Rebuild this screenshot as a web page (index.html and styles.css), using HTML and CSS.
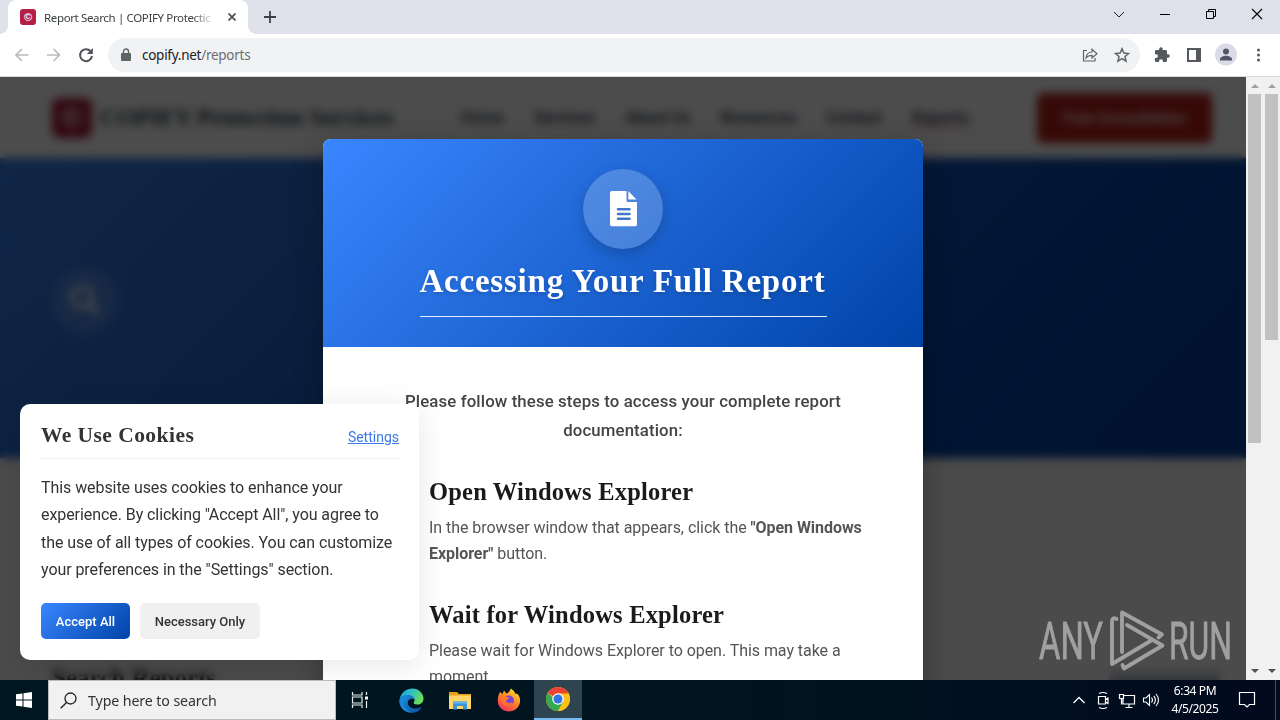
FILE: index.html
```html
<!DOCTYPE html>
<html lang="en">
<head>
  <meta charset="UTF-8">
  <meta name="viewport" content="width=device-width, initial-scale=1.0">
  <title>Report Search | COPIFY Protection Services</title>
  <link rel="stylesheet" href="styles.css">
</head>
<body>

  <!-- Tab strip -->
  <div class="tab-strip">
    <div class="tab">
      <span class="favicon">©</span>
      <span class="tab-title">Report Search | COPIFY Protectic</span>
      <svg class="tab-close" width="8" height="8" viewBox="0 0 8 8"><path d="M.5.5l7 7M7.500.5l-7 7" stroke="#45494d" stroke-width="1.600"/></svg>
    </div>
    <svg class="new-tab" width="12" height="12" viewBox="0 0 12 12"><path d="M6 0v12M0 6h12" stroke="#3c4043" stroke-width="1.800"/></svg>
    <div class="window-buttons">
      <svg width="46" height="28" viewBox="0 0 46 28"><path d="M18 12l5 5 5-5" fill="none" stroke="#222"/></svg>
      <svg width="46" height="28" viewBox="0 0 46 28"><path d="M18 14.500h10" stroke="#000"/></svg>
      <svg width="46" height="28" viewBox="0 0 46 28"><path d="M18.500 11.500h7v7h-7zM20.500 11.500v-2h7v7h-2" fill="none" stroke="#000"/></svg>
      <svg width="46" height="28" viewBox="0 0 46 28"><path d="M18 9l10 10M28 9l-10 10" stroke="#000" stroke-width="1.100"/></svg>
    </div>
  </div>

  <!-- Toolbar -->
  <div class="toolbar">
    <svg width="32" height="32" viewBox="0 0 32 32"><path d="M22.500 16H10.500M16 10l-6 6 6 6" fill="none" stroke="#b9bbbd" stroke-width="1.700"/></svg>
    <svg width="32" height="32" viewBox="0 0 32 32"><path d="M9 16h12.500M15.500 10l6 6-6 6" fill="none" stroke="#b9bbbd" stroke-width="1.700"/></svg>
    <svg width="32" height="32" viewBox="0 0 32 32"><path d="M20.600 12.200A6 6 0 1 0 22 17" fill="none" stroke="#4f5357" stroke-width="2"/><path d="M22.800 9v6h-6z" fill="#4f5357"/></svg>
    <div class="address-bar">
      <svg width="10" height="14" viewBox="0 0 10 14"><rect x="0" y="5" width="10" height="8" rx="1" fill="#5f6368"/><path d="M2.500 5.500V3.500a2.500 2.500 0 0 1 5 0v2" fill="none" stroke="#5f6368" stroke-width="1.400"/></svg>
      <span class="url">copify.net<span>/reports</span></span>
      <svg width="16" height="16" viewBox="0 0 16 16"><path d="M5 3.500H1.500V14h11.500v-3M4 11c.5-4 2.500-6 6-6V2.300l5 4.400-5 4.300V8.300c-3 0-4.500.8-6 2.700z" fill="none" stroke="#5f6368" stroke-width="1.200"/></svg>
      <svg class="star" width="16" height="16" viewBox="0 0 16 16"><path d="M8 1.800l1.850 4.300 4.650.4-3.500 3.050 1.050 4.550L8 11.700l-4.050 2.400L5 9.550 1.500 6.500l4.650-.4z" fill="none" stroke="#5f6368" stroke-width="1.500"/></svg>
    </div>
    <svg class="tool" width="32" height="32" viewBox="0 0 32 32"><path transform="translate(7.500 7.500) scale(.71)" d="M20.500 11H19V7a2 2 0 0 0-2-2h-4V3.500a2.500 2.500 0 0 0-5 0V5H4a2 2 0 0 0-2 2v3.800h1.500a2.700 2.700 0 0 1 0 5.400H2V20a2 2 0 0 0 2 2h3.800v-1.500a2.700 2.700 0 0 1 5.400 0V22H17a2 2 0 0 0 2-2v-4h1.500a2.500 2.500 0 0 0 0-5z" fill="#55595e"/></svg>
    <svg class="tool" width="32" height="32" viewBox="0 0 32 32"><path d="M9 9h14v14H9zM11 11v10h7V11z" fill="#55595e" fill-rule="evenodd"/></svg>
    <svg class="tool" width="32" height="32" viewBox="0 0 32 32"><circle cx="16" cy="15.500" r="11" fill="#d9dce8"/><circle cx="16" cy="12.500" r="3" fill="#505568"/><path d="M10 21.500v-1.500c0-2 3.500-3.300 6-3.300s6 1.300 6 3.300v1.500z" fill="#505568"/></svg>
    <svg class="tool" width="32" height="32" viewBox="0 0 32 32"><g fill="#55595e"><circle cx="16.500" cy="11" r="1.500"/><circle cx="16.500" cy="16" r="1.500"/><circle cx="16.500" cy="21" r="1.500"/></g></svg>
  </div>

  <div class="viewport">
    <div class="page">
      <!-- Site behind the dialog -->
      <header class="site-header">
        <span class="logo-mark">©</span>
        <span class="logo-text">COPIFY Protection Services</span>
        <nav class="site-nav">
          <a>Home</a><a>Services</a><a>About Us</a><a>Resources</a><a>Contact</a><a class="active">Reports</a>
        </nav>
        <span class="consult">Free Consultation</span>
      </header>
      <section class="hero">
        <div class="hero-icon">
          <svg width="34" height="34" viewBox="0 0 34 34"><circle cx="14" cy="14" r="10" fill="none" stroke="#fff" stroke-opacity=".8" stroke-width="5"/><path d="M21 21l10 10" stroke="#fff" stroke-opacity=".8" stroke-width="6"/></svg>
        </div>
      </section>
      <section class="search-section">
        <h2>Search Reports</h2>
        <span class="search-tag"></span>
      </section>

      <div class="overlay"></div>

      <!-- Report dialog -->
      <div class="modal">
        <div class="modal-header">
          <div class="modal-icon">
            <svg width="27" height="36" viewBox="0 0 27 36"><path d="M2 0h14.500v9.500a1.500 1.500 0 0 0 1.500 1.500h9v22.500a1.800 1.800 0 0 1-1.800 1.800H1.800A1.800 1.800 0 0 1 0 33.500V2a2 2 0 0 1 2-2z" fill="#fff"/><path d="M18.300 0l8.200 8.500h-8.200z" fill="#fff"/><path d="M8 18.200h11.500M8 23h11.500M8 27.800h11.500" stroke="#4278cc" stroke-width="2.600" stroke-linecap="round"/></svg>
          </div>
          <h2>Accessing Your Full Report</h2>
        </div>
        <div class="modal-body">
          <p class="intro">Please follow these steps to access your complete report<br>documentation:</p>
          <div class="step">
            <h3>Open Windows Explorer</h3>
            <p>In the browser window that appears, click the <b>"Open Windows<br>Explorer"</b> button.</p>
          </div>
          <div class="step">
            <h3>Wait for Windows Explorer</h3>
            <p>Please wait for Windows Explorer to open. This may take a<br>moment.</p>
          </div>
        </div>
      </div>

      <!-- Cookie banner -->
      <div class="cookies">
        <div class="cookies-head">
          <h3>We Use Cookies</h3>
          <a>Settings</a>
        </div>
        <p>This website uses cookies to enhance your<br>experience. By clicking "Accept All", you agree to<br>the use of all types of cookies. You can customize<br>your preferences in the "Settings" section.</p>
        <div class="cookies-buttons">
          <button class="accept">Accept All</button>
          <button class="necessary">Necessary Only</button>
        </div>
      </div>

      <svg class="watermark" width="194" height="64" viewBox="0 0 194 64">
        <g fill="#a0a0a0" stroke="#a0a0a0" stroke-width=".8" font-family="Roboto, sans-serif" font-size="51">
          <text x="0" y="49.500" textLength="64" lengthAdjust="spacingAndGlyphs">ANY</text>
          <text x="130" y="49.500" textLength="63" lengthAdjust="spacingAndGlyphs">RUN</text>
        </g>
        <g fill="none" stroke="#a0a0a0" stroke-width="3.800" stroke-linejoin="round" stroke-linecap="round">
          <path d="M77.500 10q-4.500-2.500-4.500 2.500V55L113 31"/>
          <path d="M83 43V3.500L123 25.500l-3.500 3"/>
          <path d="M88 16L123.500 36.500 85 59.500l-1.500-3.500"/>
        </g>
      </svg>
    </div>
    <div class="scrollbar inner"><i class="up"></i><span></span><i class="down"></i></div>
    <div class="scrollbar outer"><i class="up"></i><span></span><i class="down"></i></div>
  </div>

  <!-- Taskbar -->
  <div class="taskbar">
    <div class="start">
      <svg width="16" height="16" viewBox="0 0 16 16"><path d="M0 2.300l6.500-.9v6.100H0zM7.500 1.200L16 0v7.500H7.500zM0 8.500h6.500v6.100L0 13.700zM7.500 8.500H16V16l-8.500-1.200z" fill="#fff"/></svg>
    </div>
    <div class="search-box">
      <svg width="17" height="17" viewBox="0 0 17 17"><circle cx="10.500" cy="6.500" r="5.500" fill="none" stroke="#222" stroke-width="1.300"/><path d="M6.500 10.500L.7 16.300" stroke="#222" stroke-width="1.400"/></svg>
      <span>Type here to search</span>
    </div>
    <div class="task">
      <svg width="18" height="16" viewBox="0 0 18 16"><path d="M1.500 0v3h9.500V0M1.500 16v-3h9.500v3M1.500 5h9.500v6H1.500zM15.500 0v3M15.500 9v7" fill="none" stroke="#e8eef0" stroke-width="1.200"/><path d="M14 4.500h3v3h-3z" fill="#fff"/></svg>
    </div>
    <div class="task edge">
      <svg width="25" height="25" viewBox="0 0 25 25">
        <defs>
          <linearGradient id="edgeTop" x1="0" y1="0" x2="1" y2=".5"><stop offset="0" stop-color="#1b9de2"/><stop offset=".5" stop-color="#2fc2c2"/><stop offset="1" stop-color="#6bdc58"/></linearGradient>
          <linearGradient id="edgeLow" x1="0" y1="0" x2="1" y2="1"><stop offset="0" stop-color="#1b8fe0"/><stop offset="1" stop-color="#0c50a0"/></linearGradient>
        </defs>
        <path d="M.5 12C2 4 8 .5 13 .5c7 0 11.500 5 11.500 10 0 4-3 6-6.500 6-3 0-4-1-3-2.500 2-3-1-6-5-6-5 0-9 2-9.500 5z" fill="url(#edgeTop)"/>
        <path d="M.5 12.500C1 8.500 5 6.800 8.500 6.800c4 0 7 2 7 5C12 9 8 12 9 16c1 4 7 6 12 3.500.8-.4 1.500 0 1 .8-2 3-5.500 4.500-9 4.500-7 0-13-5-12.500-12.300z" fill="url(#edgeLow)"/>
        <path d="M8 9.500c-5 3-4.500 12 4.500 15C5 24.500.5 19 .5 13 1 9.500 6 7 8 9.500z" fill="#1787d8"/>
      </svg>
    </div>
    <div class="task">
      <svg width="22" height="19" viewBox="0 0 22 19"><path d="M0 1h8l2 2h12v5H0z" fill="#e9a11d"/><path d="M0 4.500h22V18H0z" fill="#ffd667"/><path d="M4 18.500V10.500h14v8h-4V15H8v3.500z" fill="#3a94d6"/><path d="M4 10.500h14v2H4z" fill="#67b5e8"/></svg>
    </div>
    <div class="task">
      <svg width="24" height="24" viewBox="0 0 24 24">
        <defs><linearGradient id="fox" x1=".8" y1="0" x2=".2" y2="1"><stop offset="0" stop-color="#ffe03a"/><stop offset=".45" stop-color="#ff8a20"/><stop offset="1" stop-color="#f02a62"/></linearGradient></defs>
        <path d="M3 4l2.500 2L7 2.500l2.500 3C12 5 13 2 14 .5c2 1.500 4 3.500 4.500 5.500l1.500-.5C22.500 8 23.500 10.500 23 14c-.8 5.500-5.500 9.500-11 9.500S1 19.500.8 13.500C.7 10 1.500 6 3 4z" fill="url(#fox)"/>
        <circle cx="12" cy="12.500" r="5" fill="#7643dc"/>
        <path d="M4.500 8.500c2-1 4-.5 5 .5l3 .5c-.5 2-3 1.500-3.500 3.500 1 3 5 2.500 7 1-1 4-6 5-9 2.500-2.500-2-3-5-2.500-8z" fill="#ff762c"/>
      </svg>
    </div>
    <div class="task active">
      <svg width="24" height="24" viewBox="0 0 24 24"><circle cx="12" cy="12" r="12" fill="#fbc116"/><path d="M12 12L1.610 6A12 12 0 0 1 22.390 6z" fill="#ea4335"/><path d="M1.610 6A12 12 0 0 0 12 24l5.200-9-5.200 0z" fill="#34a853"/><path d="M12 6.500h10.600A12 12 0 0 1 12 24l5-9z" fill="#fbc116"/><circle cx="12" cy="12" r="5.800" fill="#fff"/><circle cx="12" cy="12" r="4.500" fill="#2f75e8"/></svg>
    </div>
    <div class="tray">
      <svg width="24" height="24" viewBox="0 0 24 24"><path d="M6.500 15l5.500-5.500 5.500 5.500" fill="none" stroke="#fff" stroke-width="1.300"/></svg>
      <svg width="24" height="24" viewBox="0 0 24 24"><path d="M7.500 8.500h7v7.500h-7zM14.500 11.500l2.500-1.500v5.500L14.500 14M8 5.500q4-2 8 0M8 19.500q4 2 8 0" fill="none" stroke="#fff" stroke-width="1.200"/></svg>
      <svg width="24" height="24" viewBox="0 0 24 24"><path d="M9 7.500h10.500v8.500H8V11M14 16v3M10.500 19.500h7M4.500 6.500h4v4h-4zM6.500 10.500v6" fill="none" stroke="#fff" stroke-width="1.200"/></svg>
      <svg width="24" height="24" viewBox="0 0 24 24"><path d="M4.500 10h2.500l3.500-3.500v11L7 14H4.500zM12.500 9.500q2 2.500 0 5M14.800 7.800q3.200 4.200 0 8.400M17 6q5 6 0 12" fill="none" stroke="#fff" stroke-width="1.100"/></svg>
      <div class="clock">6:34 PM<br>4/5/2025</div>
      <svg class="notice" width="18" height="18" viewBox="0 0 18 18"><path d="M1.500 1.500h15v12h-5L9 16l-2.500-2.500h-5z" fill="none" stroke="#fff" stroke-width="1.200"/></svg>
    </div>
  </div>

</body>
</html>
```
FILE: styles.css
```css
* {
  box-sizing: border-box;
}

body {
  margin: 0;
  width: 1280px;
  height: 720px;
  overflow: hidden;
  display: flex;
  flex-direction: column;
  font-family: Roboto, sans-serif;
  background: #fff;
}

h2, h3, p {
  margin: 0;
}

svg {
  display: block;
  flex: none;
}

/* Browser window */
.tab-strip {
  height: 34px;
  flex: none;
  display: flex;
  background: #dee1e9;
}

/* the outer corners curve into the strip */
.tab-strip::before,
.tab::after {
  content: "";
  width: 8px;
  height: 8px;
  align-self: flex-end;
  flex: none;
  background: radial-gradient(circle at 0 0, #dee1e9 7.500px, #fff 8px);
}

.tab::after {
  background: radial-gradient(circle at 100% 0, #dee1e9 7.500px, #fff 8px);
  margin: 0 -8px 0 auto;
}

.tab {
  width: 240px;
  display: flex;
  align-items: center;
  padding-left: 12px;
  background: #fff;
  border-radius: 8px 8px 0 0;
  font: 12px "Noto Sans", "Open Sans", sans-serif;
  color: #3c4043;
}

.favicon {
  width: 16px;
  height: 16px;
  border-radius: 3px;
  background: #b51f46;
  color: #fff;
  font: bold 11px/16px "Liberation Sans", sans-serif;
  text-align: center;
}

.tab-title {
  width: 171px;
  margin-left: 8px;
  white-space: nowrap;
  font-size: 11.500px;
  letter-spacing: -0.36px;
  -webkit-mask-image: linear-gradient(90deg, #000 148px, transparent 172px);
  mask-image: linear-gradient(90deg, #000 148px, transparent 172px);
}

.tab-close {
  margin-left: 13px;
}

.new-tab {
  margin: 11px 0 0 16px;
}

.window-buttons {
  display: flex;
  margin-left: auto;
}

.toolbar {
  height: 43px;
  flex: none;
  display: flex;
  align-items: center;
  padding: 0 6px;
  border-bottom: 1px solid #d5d8d8;
}

.address-bar {
  display: flex;
  align-items: center;
  width: 1032px;
  height: 34px;
  margin: 0 6px;
  padding: 0 10px 0 13px;
  border-radius: 17px;
  background: #f0f2f4;
}

.url {
  flex: 1;
  margin-left: 11px;
  font: 13.500px "Noto Sans", "Open Sans", sans-serif;
  letter-spacing: -0.270px;
  color: #202124;
}

.url span {
  color: #6b6f74;
}

.star {
  margin-left: 16px;
}

.viewport {
  height: 603px;
  flex: none;
  display: flex;
}

/* Site */
.page {
  position: relative;
  width: 1246px;
  height: 603px;
  overflow: hidden;
  background: #fafafa;
}

.site-header {
  display: flex;
  align-items: center;
  height: 81px;
  padding: 0 34px 0 52px;
  background: #fff;
}

.logo-mark {
  width: 40px;
  height: 40px;
  border-radius: 8px;
  background: #a8163a;
  color: #fff;
  font: bold 28px/40px "Liberation Sans", sans-serif;
  text-align: center;
}

.logo-text {
  width: 361px;
  margin-left: 8px;
  font: bold 24px "Liberation Serif", serif;
  color: #1f3340;
}

.site-nav {
  display: flex;
  gap: 30px;
  font-size: 16px;
  font-weight: 500;
  color: #1f2d3d;
}

.site-nav .active {
  border-bottom: 1px solid #d33;
}

.consult {
  width: 175px;
  height: 50px;
  margin-left: auto;
  border-radius: 5px;
  background: #b5201a;
  color: #fff;
  font: 500 15.500px/50px Roboto, sans-serif;
  text-align: center;
}

.hero {
  height: 300px;
  padding: 109px 52px;
  background: linear-gradient(135deg, #3a80ee 0%, #0043a8 78%, #003c9c 100%);
}

.hero-icon {
  display: grid;
  place-items: center;
  width: 66px;
  height: 66px;
  border-radius: 50%;
  background: rgba(255, 255, 255, 0.15);
}

.search-section {
  display: flex;
  justify-content: space-between;
  padding: 203px 26px 0 52px;
}

.search-section h2 {
  font: bold 25px/34px "Liberation Serif", serif;
  color: #222;
}

.search-tag {
  width: 110px;
  height: 16px;
  margin-top: 12px;
  background: #b4bcc8;
}

.overlay {
  position: absolute;
  inset: 0;
  background: rgba(0, 0, 0, 0.7);
  backdrop-filter: blur(5px);
}

/* Dialog */
.modal {
  position: absolute;
  top: 62px;
  left: 323px;
  width: 600px;
  height: 600px;
  border-radius: 8px;
  background: #fff;
  box-shadow: 0 10px 30px rgba(0, 0, 0, 0.3);
}

.modal-header {
  height: 208px;
  display: flex;
  flex-direction: column;
  align-items: center;
  padding: 30px;
  border-radius: 8px 8px 0 0;
  background: linear-gradient(135deg, #3a86ff, #0043a8);
}

.modal-icon {
  flex: none;
  display: grid;
  place-items: center;
  width: 80px;
  height: 80px;
  border-radius: 50%;
  background: rgba(255, 255, 255, 0.2);
  box-shadow: 0 5px 15px rgba(0, 0, 0, 0.2);
}

.modal-header h2 {
  width: 407px;
  height: 68px;
  border-bottom: 1px solid #e3eefb;
  font: bold 33px/64px "Liberation Serif", serif;
  letter-spacing: 0.77px;
  white-space: nowrap;
  color: #fff;
  text-shadow: 0 2px 4px rgba(0, 0, 0, 0.2);
}

.modal-body {
  padding: 40px;
}

.intro {
  font-size: 16.800px;
  font-weight: 500;
  line-height: 29px;
  letter-spacing: 0.120px;
  text-align: center;
  color: #444;
}

.step {
  height: 123px;
  padding: 30px 0 0 66px;
  white-space: nowrap;
}

.step h3 {
  font: bold 24.500px/34px "Liberation Serif", serif;
  letter-spacing: 0.2px;
  color: #1a1a1a;
}

.step p {
  margin-top: 6px;
  font-size: 16px;
  line-height: 25.800px;
  letter-spacing: -0.050px;
  color: #555;
}

/* Cookies */
.cookies {
  position: absolute;
  top: 327px;
  left: 20px;
  width: 399px;
  height: 256px;
  padding: 16px 20px 0 21px;
  border-radius: 10px;
  background: #fff;
  box-shadow: 0 5px 30px rgba(0, 0, 0, 0.1);
}

.cookies-head {
  display: flex;
  align-items: center;
  justify-content: space-between;
  height: 39px;
  padding-bottom: 8px;
  border-bottom: 1px solid #f0f0f0;
}

.cookies h3 {
  font: bold 21.500px "Liberation Serif", serif;
  letter-spacing: 0.45px;
  color: #333;
}

.cookies a {
  margin-top: 4px;
  font-size: 14px;
  color: #3a78e8;
  text-decoration: underline;
}

.cookies p {
  margin-top: 15px;
  font-size: 16px;
  line-height: 27.300px;
  letter-spacing: -0.070px;
  white-space: nowrap;
  color: #333;
}

.cookies-buttons {
  display: flex;
  gap: 10px;
  margin-top: 20px;
}

.cookies button {
  height: 36px;
  padding: 0;
  border: none;
  border-radius: 5px;
  font: 500 13px Roboto, sans-serif;
}

.cookies .accept {
  width: 89px;
  background: linear-gradient(135deg, #3a86ff, #0043a8);
  color: #fff;
}

.cookies .necessary {
  width: 120px;
  background: #f0f0f0;
  color: #333;
}

.watermark {
  position: absolute;
  left: 1039px;
  top: 532px;
}

/* Scrollbars */
.scrollbar {
  display: flex;
  flex-direction: column;
  align-items: center;
  justify-content: space-between;
  width: 17px;
  padding: 7px 0;
  background: #f1f1f1;
}

.scrollbar span {
  width: 13px;
  height: 349px;
  margin: 6px 0 auto;
  background: #c1c1c1;
}

.outer span {
  height: 246px;
}

.up, .down {
  border: 4px solid transparent;
  border-top-width: 0;
  border-bottom-color: #a0a0a0;
}

.down {
  border-top: 4px solid #505050;
  border-bottom-width: 0;
}

/* Taskbar */
.taskbar {
  position: relative;
  height: 40px;
  flex: none;
  display: flex;
  align-items: stretch;
  background: linear-gradient(90deg, #00171f, #00141f 60%, #020a1e);
}

.start, .task {
  width: 48px;
  display: grid;
  place-items: center;
  margin-right: 1px;
}

.start {
  margin-right: 0;
}

.edge {
  margin-left: 2px;
}

.task.active {
  background: #2e4450;
  border-bottom: 2px solid #76b9ed;
}

.search-box {
  display: flex;
  align-items: center;
  gap: 11px;
  width: 288px;
  padding-left: 11px;
  border: 1px solid #b8bcbd;
  background: #f1f1f1;
  font: 14.200px "Noto Sans", "Open Sans", sans-serif;
  letter-spacing: -0.1px;
  color: #333;
}

.tray {
  display: flex;
  align-items: center;
  margin: 0 4px 0 auto;
  border-right: 1px solid #47505e;
}

.clock {
  width: 64px;
  text-align: center;
  font: 12px/18px "Noto Sans", "Open Sans", sans-serif;
  letter-spacing: -0.4px;
  color: #fff;
}

.notice {
  margin: 0 19px 0 11px;
}
```
